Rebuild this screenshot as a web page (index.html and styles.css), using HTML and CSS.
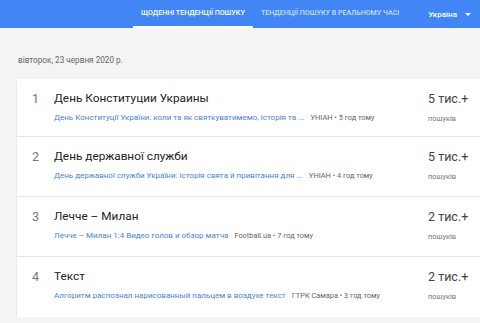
FILE: index.html
```html
<!DOCTYPE html>
<html lang="uk">
<head>
    <meta charset="UTF-8">
    <meta name="viewport" content="width=device-width, initial-scale=1.0">
    <title>Тенденції пошуку</title>
    <link rel="stylesheet" href="styles.css">
</head>
<body>
    <header class="top-bar">
        <nav class="tabs">
            <a class="tab active">Щоденні тенденції пошуку</a>
            <a class="tab">Тенденції пошуку в реальному часі</a>
        </nav>
        <div class="geo">
            Україна
            <span class="caret"></span>
        </div>
    </header>

    <main class="content">
        <div class="date">вівторок, 23 червня 2020 р.</div>

        <div class="card">
            <div class="row">
                <div class="index">1</div>
                <div class="details">
                    <div class="title">День Конституции Украины</div>
                    <div class="summary">
                        <a class="article">День Конституції України: коли та як святкуватимемо, історія та ...</a>
                        <span class="source">УНІАН • 5 год тому</span>
                    </div>
                </div>
                <div class="count">
                    <div class="amount">5 тис.+</div>
                    <div class="label">пошуків</div>
                </div>
            </div>
            <div class="row">
                <div class="index">2</div>
                <div class="details">
                    <div class="title">День державної служби</div>
                    <div class="summary">
                        <a class="article">День державної служби України: історія свята й привітання для ...</a>
                        <span class="source">УНІАН • 4 год тому</span>
                    </div>
                </div>
                <div class="count">
                    <div class="amount">5 тис.+</div>
                    <div class="label">пошуків</div>
                </div>
            </div>
            <div class="row">
                <div class="index">3</div>
                <div class="details">
                    <div class="title">Лечче – Милан</div>
                    <div class="summary">
                        <a class="article">Лечче – Милан 1:4 Видео голов и обзор матча</a>
                        <span class="source">Football.ua • 7 год тому</span>
                    </div>
                </div>
                <div class="count">
                    <div class="amount">2 тис.+</div>
                    <div class="label">пошуків</div>
                </div>
            </div>
            <div class="row">
                <div class="index">4</div>
                <div class="details">
                    <div class="title">Текст</div>
                    <div class="summary">
                        <a class="article">Алгоритм распознал нарисованный пальцем в воздухе текст</a>
                        <span class="source">ГТРК Самара • 3 год тому</span>
                    </div>
                </div>
                <div class="count">
                    <div class="amount">2 тис.+</div>
                    <div class="label">пошуків</div>
                </div>
            </div>
        </div>
    </main>
</body>
</html>
```

FILE: styles.css
```css
* {
    margin: 0;
    padding: 0;
    box-sizing: border-box;
}

body {
    font-family: Roboto, "Liberation Sans", sans-serif;
    background: #f4f4f4;
    overflow: hidden;
    width: 480px;
}

.top-bar {
    display: flex;
    align-items: stretch;
    height: 28px;
    background: #4285f4;
    padding-left: 133px;
}

.tabs {
    display: flex;
}

.tab {
    display: flex;
    align-items: center;
    padding: 0 8px 2px;
    font-size: 7.1px;
    font-weight: 500;
    text-transform: uppercase;
    color: rgba(255, 255, 255, 0.72);
    border-bottom: 2px solid transparent;
    white-space: nowrap;
}

.tab.active {
    color: #fff;
    border-bottom-color: #fff;
}

.geo {
    display: flex;
    align-items: center;
    margin-left: auto;
    padding-right: 9px;
    font-size: 8px;
    font-weight: 500;
    color: #fff;
}

.caret {
    margin-left: 8px;
    width: 0;
    height: 0;
    border-left: 3px solid transparent;
    border-right: 3px solid transparent;
    border-top: 3px solid #fff;
}

.content {
    padding-left: 17px;
}

.date {
    padding: 27px 0 13px 1px;
    font-size: 8.2px;
    color: #666;
    line-height: 11px;
}

.card {
    width: 463px;
    background: #fff;
    box-shadow: 0 1px 2px rgba(0, 0, 0, 0.12);
}

.row {
    display: flex;
    height: 60px;
    border-bottom: 1px solid #e6e6e6;
}

.row:first-child {
    height: 58px;
}

.row:last-child {
    border-bottom: none;
}

.index {
    width: 37px;
    padding: 12px 0 0 15px;
    font-size: 12.5px;
    color: #757575;
    line-height: 15px;
}

.details {
    flex: 1;
    min-width: 0;
    padding-top: 12px;
}

.title {
    font-size: 11.8px;
    line-height: 15px;
    color: #222;
}

.summary {
    display: flex;
    align-items: center;
    margin-top: 7px;
    font-size: 8px;
    line-height: 10px;
    white-space: nowrap;
}

.article {
    color: #4a83d9;
}

.source {
    margin-left: 6px;
    font-size: 7.4px;
    color: #666;
}

.count {
    width: 52px;
    padding-top: 12px;
    flex-shrink: 0;
}

.amount {
    font-size: 12.5px;
    line-height: 16px;
    color: #444;
}

.label {
    margin-top: 7px;
    font-size: 7.4px;
    line-height: 10px;
    color: #777;
}
```
